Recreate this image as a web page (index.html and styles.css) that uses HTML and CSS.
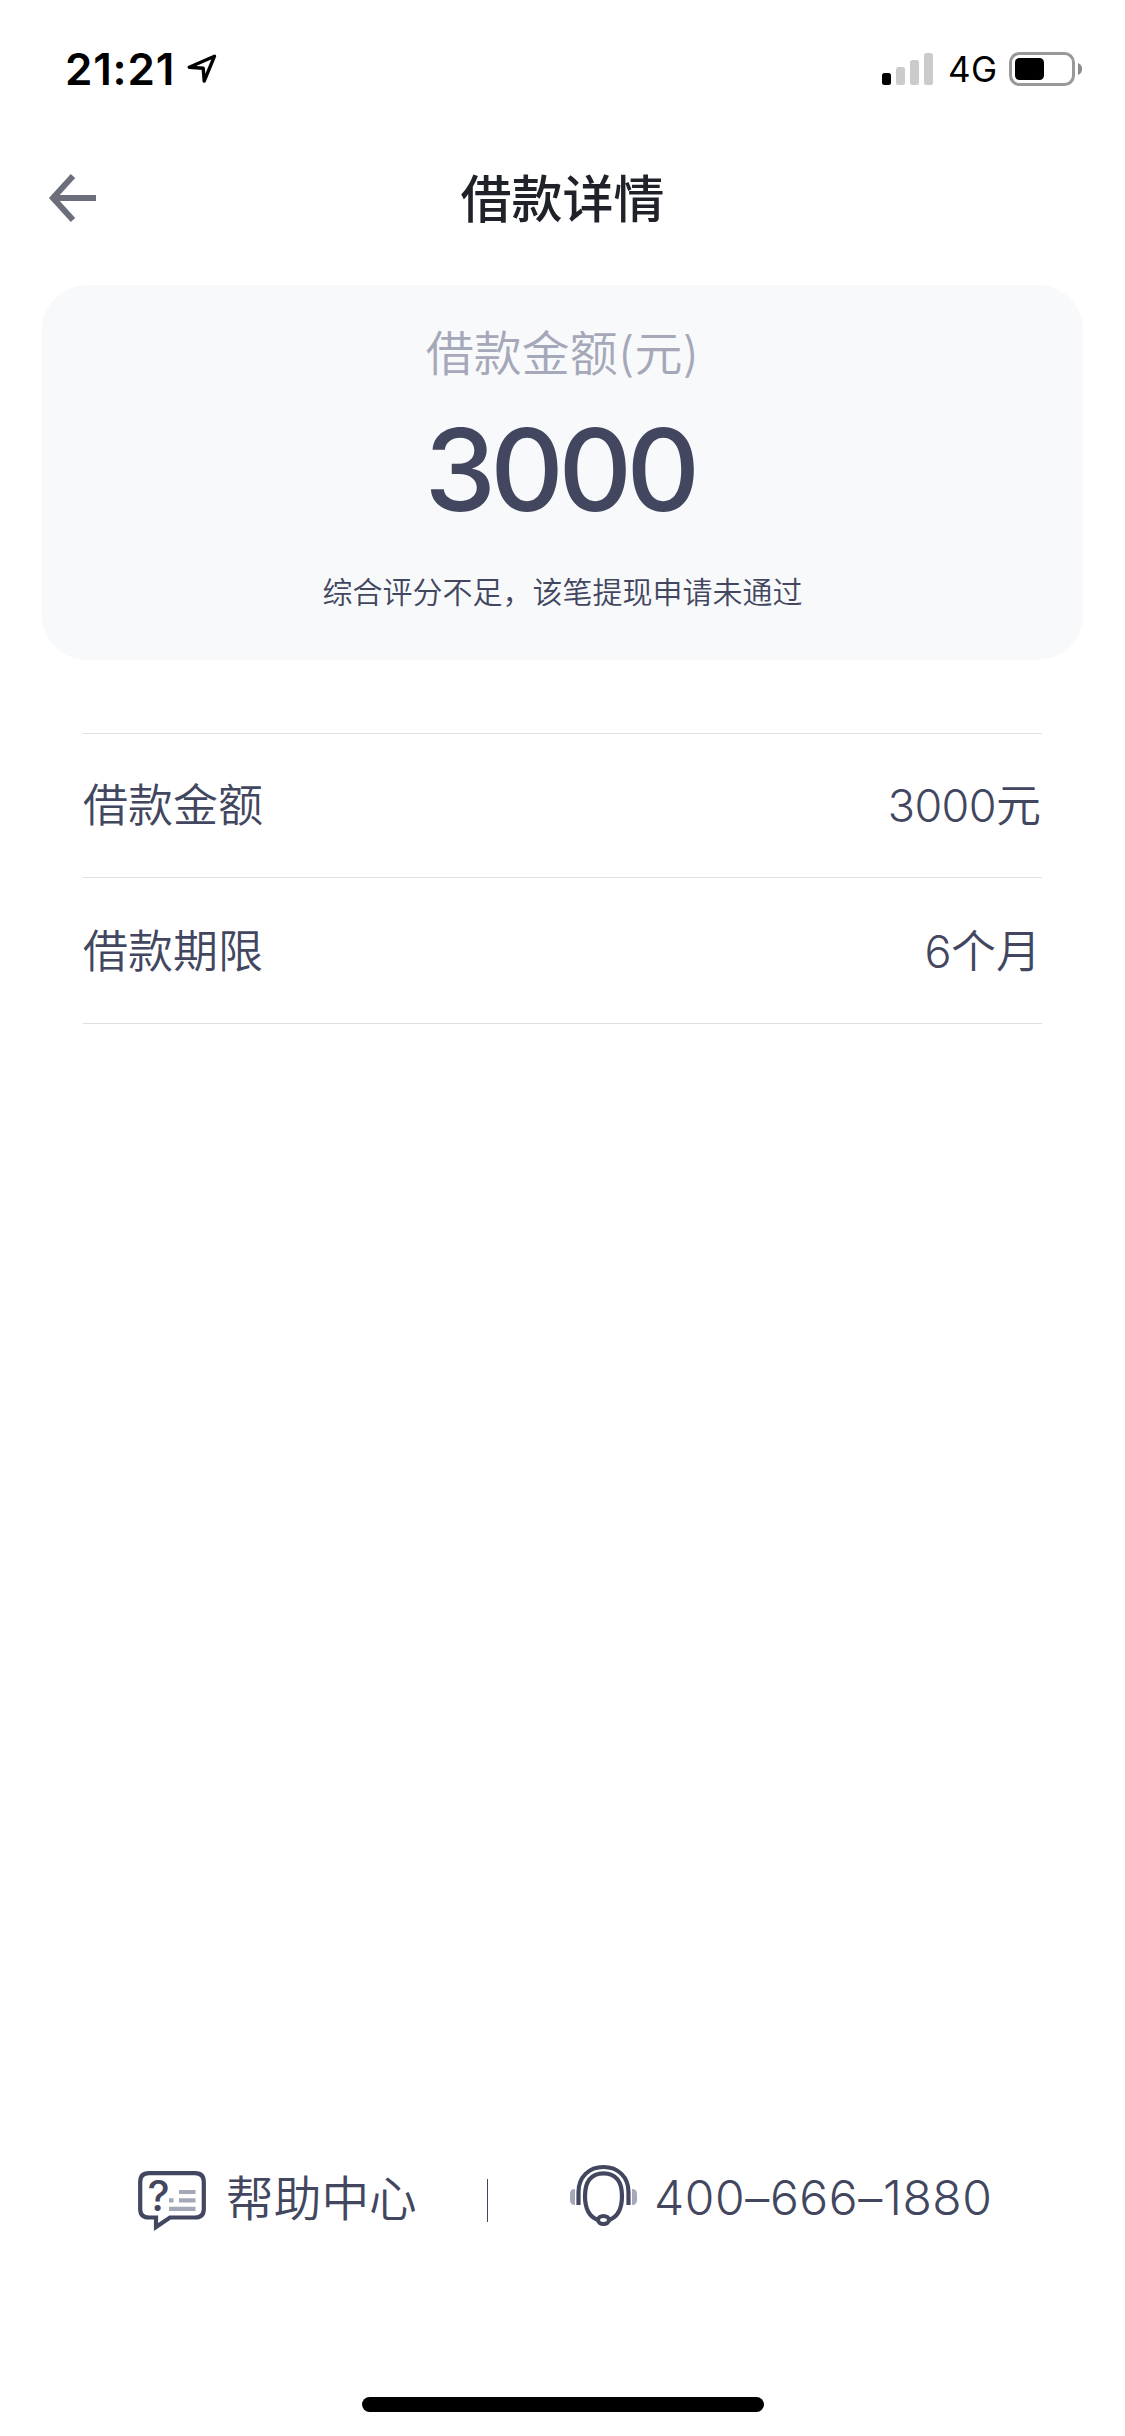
FILE: index.html
```html
<!DOCTYPE html>
<html lang="zh-CN">
<head>
<meta charset="utf-8">
<title>借款详情</title>
<link rel="stylesheet" href="styles.css">
</head>
<body>
<div class="screen">
  <div class="status">
    <span class="time">21:21</span>
    <svg class="location" width="32" height="32" viewBox="0 0 32 32"><path d="M3.2 14.2 28.5 3.2 18.200 28 17.200 15.200Z" fill="none" stroke="#000" stroke-width="3.4" stroke-linejoin="round"/></svg>
    <svg class="signal" width="52" height="33" viewBox="0 0 52 33">
      <rect x="0" y="20" width="9" height="12" rx="2.5"/>
      <g fill="#cbcbcb"><rect x="14" y="14" width="9" height="18" rx="2.5"/><rect x="28" y="7" width="9" height="25" rx="2.5"/><rect x="42" y="0" width="9" height="32" rx="2.5"/></g>
    </svg>
    <span class="network">4G</span>
    <svg class="battery" width="74" height="35" viewBox="0 0 74 35">
      <rect x="1.5" y="1.5" width="63" height="31" rx="9" fill="none" stroke="#999" stroke-width="3"/>
      <rect x="6" y="6" width="29" height="22" rx="4.5"/>
      <path d="M69 11q4 1.500 4 6t-4 6z" fill="#8a8a8a"/>
    </svg>
  </div>
  <header class="nav">
    <svg class="back" width="50" height="50" viewBox="0 0 50 50"><path d="M26 3 6 25 26 47M6 25H49" fill="none" stroke="#6c6e79" stroke-width="6"/></svg>
    <h1 class="title">借款详情</h1>
  </header>
  <section class="card">
    <div class="card-label">借款金额(元)</div>
    <div class="card-amount">3000</div>
    <div class="card-note">综合评分不足，该笔提现申请未通过</div>
  </section>
  <dl class="details">
    <div class="row"><dt>借款金额</dt><dd><span class="number">3000</span>元</dd></div>
    <div class="row"><dt>借款期限</dt><dd><span class="number">6</span>个月</dd></div>
  </dl>
  <footer class="footer">
    <svg class="help-icon" width="68" height="61" viewBox="0 0 68 61">
      <path d="M11 2.200H57Q65.800 2.200 65.800 11V38Q65.800 46.500 57 46.500H32L18 56V46.500H11Q2.200 46.500 2.200 38V11Q2.200 2.200 11 2.200Z" fill="none" stroke="#42475f" stroke-width="4.200"/>
      <path d="M41 21H57.500M31 29.300h4.500M41 29.300H57.500M31 37.800H57.500" stroke="#a5a8b8" stroke-width="4.200"/>
      <text class="help-mark" x="20.500" y="39.500" text-anchor="middle">?</text>
    </svg>
    <span class="help">帮助中心</span>
    <span class="divider"></span>
    <svg class="phone-icon" width="68" height="63" viewBox="0 0 68 63">
      <path d="M5 25v16Q0 41 0 36v-6q0-5 5-5zM62 25v16q5 0 5-5v-6q0-5-5-5z" fill="#a5a8b8"/>
      <g fill="none" stroke="#42475f" stroke-width="4.200">
        <path d="M8.500 41V28C8.500 13 19 3 33.500 3S58.500 13 58.500 28V41"/>
        <path d="M28 56C18 52.500 15 43 15 32C15 18 21 9.300 33.500 9.300S52 18 52 32C52 43 49 52.500 39 56"/>
        <ellipse cx="33.500" cy="56" rx="5.500" ry="4"/>
      </g>
    </svg>
    <span class="phone">400–666–1880</span>
  </footer>
  <div class="home-bar"></div>
</div>
</body>
</html>
```
FILE: styles.css
```css
* { box-sizing: border-box; }
body { margin: 0; background: #fff; }
.screen {
  width: 1125px;
  height: 2436px;
  display: flex;
  flex-direction: column;
  font-family: Inter, "Noto Sans CJK SC", sans-serif;
  font-weight: 350;
  color: #42475f;
  white-space: nowrap;
}
svg { display: block; flex: none; }
.status {
  height: 132px;
  padding: 6px 42px 0 65px;
  display: flex;
  align-items: center;
  color: #000;
}
.time { width: 121px; font-size: 44px; font-weight: 600; letter-spacing: 0.8px; }
.signal { margin-left: auto; }
.network { width: 61px; margin-left: 14px; font-size: 35px; font-weight: 400; letter-spacing: 0.5px; }
.battery { margin-left: 0; }
.nav {
  height: 153px;
  padding: 0 47px 21px;
  display: grid;
  grid-template-columns: 50px 1fr 50px;
  align-items: center;
}
.title {
  margin: 0;
  padding-top: 4px;
  text-align: center;
  font-size: 51px;
  font-weight: 500;
  line-height: 70px;
  color: #1f2228;
}
.card {
  height: 375px;
  margin: 0 42px;
  padding-top: 34px;
  border-radius: 45px;
  background: #f8f9fb;
  text-align: center;
}
.card-label { font-size: 48px; line-height: 70px; color: #a5a8b8; }
.card-amount {
  margin: 16px 6px 0 0;
  font-size: 114px;
  line-height: 130px;
  font-weight: 500;
  letter-spacing: -5.5px;
}
.card-note { font-size: 30px; line-height: 44px; margin-top: 35px; }
.details { margin: 73px 83px 0; border-top: 1px solid #e0e0e2; }
.row {
  height: 144px;
  display: flex;
  align-items: center;
  justify-content: space-between;
  border-bottom: 1px solid #e0e0e2;
  font-size: 45px;
  line-height: 64px;
}
.row + .row { height: 146px; padding-top: 2px; }
.row dd { margin: 0 1px 0 0; }
.number { letter-spacing: -0.6px; }
.footer {
  height: 70px;
  margin-top: auto;
  padding-left: 138px;
  display: flex;
  align-items: center;
  font-size: 48px;
  line-height: 66px;
}
.help-icon { margin-top: 2px; }
.help-mark { font: 500 42px Inter, sans-serif; fill: #42475f; }
.help { width: 193px; margin: 0 0 2px 20px; font-size: 47.7px; }
.divider { width: 1px; height: 43px; margin-left: 68px; background: #42475f; }
.phone-icon { margin: 0 0 9px 82px; }
.phone { margin: 0 0 4px 16px; letter-spacing: 0.6px; }
.home-bar {
  width: 402px;
  height: 15px;
  margin: 162px auto 24px;
  border-radius: 8px;
  background: #000;
}
```
